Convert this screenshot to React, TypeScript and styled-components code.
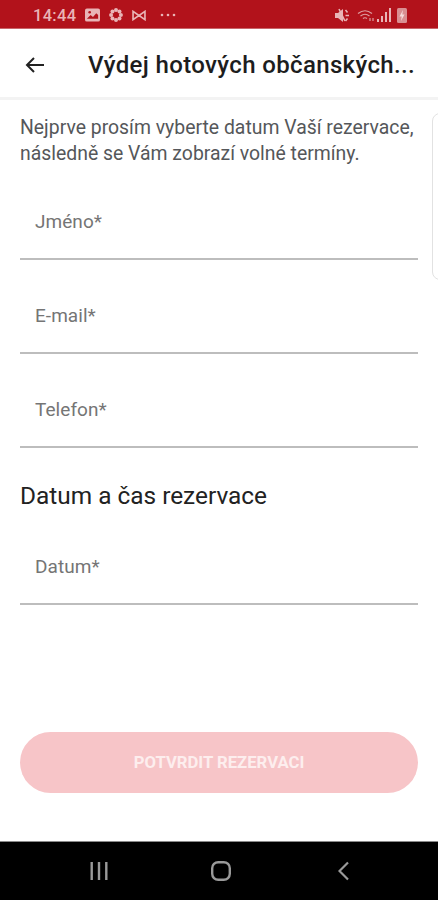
import React from 'react'
import styled, { createGlobalStyle } from 'styled-components'

const GlobalStyle = createGlobalStyle`
html, body {
  margin: 0;
  padding: 0;
  background: #fff;
}
`;
const Screen = styled.div`
width: 438px;
height: 900px;
display: flex;
flex-direction: column;
overflow: hidden;
font-family: Roboto, "Liberation Sans", sans-serif;
background: #fff;
`;
const StatusBar = styled.div`
height: 29px;
flex: none;
background: #b2121b;
border-bottom: 1px solid #c9656a;
display: flex;
align-items: center;
justify-content: space-between;
padding: 2px 31px 0 33px;
box-sizing: border-box;
color: #e9b4b6;
`;
const StatusGroup = styled.div`
display: flex;
align-items: center;
gap: ${(p: { $gap: number }) => p.$gap}px;
`;
const Clock = styled.span`
font-size: 16.5px;
font-weight: 500;
letter-spacing: 0.3px;
`;
const Header = styled.header`
height: 71px;
flex: none;
display: flex;
align-items: center;
padding: 4px 0 0 25px;
box-sizing: border-box;
background: #fff;
border-bottom: 3px solid #f3f3f3;
`;
const BackButton = styled.div`
width: 19px;
height: 16px;
flex: none;
display: flex;
margin-right: 44px;
`;
const Title = styled.h1`
margin: 0;
font-size: 24px;
font-weight: 500;
color: #1d1d1d;
white-space: nowrap;
letter-spacing: 0.36px;
`;
const Body = styled.div`
flex: 1;
display: flex;
flex-direction: column;
padding: 15px 20px 0;
position: relative;
`;
const Intro = styled.p`
margin: 0 0 13px;
font-size: 19.4px;
line-height: 26px;
color: #55575a;
white-space: nowrap;
`;
const Field = styled.div`
height: 80px;
margin-bottom: 14px;
box-sizing: border-box;
border-bottom: 2px solid #bdbdbd;
padding: 30px 0 0 15px;
font-size: 19px;
line-height: 24px;
letter-spacing: 0.05px;
color: #757575;
`;
const SectionTitle = styled.h2`
margin: 19px 0 14px;
font-size: 24.4px;
font-weight: 400;
line-height: 30px;
color: #222;
`;
const PeekCard = styled.div`
position: absolute;
top: 13px;
right: -12px;
width: 18px;
height: 167px;
box-sizing: border-box;
border: 1px solid #e2e2e2;
border-radius: 8px;
`;
const SubmitButton = styled.button`
margin-top: 113px;
height: 61px;
width: 100%;
flex: none;
border: 0;
border-radius: 31px;
background: #f7c5c8;
color: #fdeeee;
font-family: Roboto, "Liberation Sans", sans-serif;
font-size: 16.7px;
font-weight: 700;
`;
const NavBar = styled.nav`
height: 59px;
flex: none;
background: #000;
border-top: 1px solid #8a8a8a;
box-sizing: border-box;
display: flex;
align-items: center;
justify-content: space-between;
padding: 0 89px 0 90px;
`;

const App = () => {
  return (
    <Screen>
      <GlobalStyle />
      <StatusBar>
        <StatusGroup $gap={9}>
          <Clock>14:44</Clock>
          <svg width="15" height="14" viewBox="0 0 16 14">
            <rect width="16" height="14" rx="2" fill="#e9b4b6" />
            <path d="M2 11 L6 7 L8.5 9 L12 5 L14 7 V11 Z" fill="#b2121b" />
            <circle cx="5" cy="4" r="1.4" fill="#b2121b" />
          </svg>
          <svg width="14" height="14" viewBox="0 0 16 16" fill="#e9b4b6">
            <circle cx="8" cy="2.4" r="2.3" />
            <circle cx="8" cy="13.6" r="2.3" />
            <circle cx="2.4" cy="8" r="2.3" />
            <circle cx="13.6" cy="8" r="2.3" />
            <circle cx="4" cy="4" r="2.3" />
            <circle cx="12" cy="4" r="2.3" />
            <circle cx="4" cy="12" r="2.3" />
            <circle cx="12" cy="12" r="2.3" />
          </svg>
          <svg width="14" height="11" viewBox="0 0 15 12" fill="none" stroke="#e9b4b6" strokeWidth="1.8">
            <path d="M1 1.5 V10.5 L7.5 6 Z M14 1.5 V10.5 L7.5 6 Z" />
          </svg>
          <svg width="16" height="4" viewBox="0 0 16 4" fill="#e9b4b6" style={{ marginLeft: 5 }}>
            <circle cx="2" cy="2" r="1.3" />
            <circle cx="8" cy="2" r="1.3" />
            <circle cx="14" cy="2" r="1.3" />
          </svg>
        </StatusGroup>
        <StatusGroup $gap={0}>
          <svg width="22" height="15" viewBox="0 0 22 15" fill="#e9b4b6">
            <path d="M0 5 H3 L8 1 V14 L3 10 H0 Z" />
            <path d="M4 1 L10 13" stroke="#e9b4b6" strokeWidth="1.6" />
            <path d="M10.5 2 L12.5 4.5 M10.5 7.5 H14 M10.5 13 L12.5 10.5" stroke="#e9b4b6" strokeWidth="1.5" />
          </svg>
          <svg width="20" height="13" viewBox="0 0 20 13" fill="none" stroke="#dd9ea1" strokeWidth="1.2">
            <path d="M1 4.5 Q8 -1 15 4.5" />
            <path d="M3.5 7 Q8 3.5 12.5 7" />
            <path d="M6 9.5 Q8 8 10 9.5" />
            <path d="M13 9 V12 M16 9 V12" />
          </svg>
          <svg width="20" height="14" viewBox="0 0 20 14" fill="#e9b4b6">
            <rect x="0" y="11" width="2" height="3" />
            <rect x="4" y="8" width="2" height="6" />
            <rect x="8" y="4" width="2" height="10" />
            <rect x="12" y="0" width="2" height="14" />
          </svg>
          <svg width="10" height="15" viewBox="0 0 10 15">
            <rect width="10" height="15" rx="1.5" fill="#d98f92" />
            <path d="M6 2 L2.5 8.5 H4.7 L4 13 L7.5 6.5 H5.3 Z" fill="#f6dcdc" />
          </svg>
        </StatusGroup>
      </StatusBar>
      <Header>
        <BackButton>
          <svg width="19" height="16" viewBox="0 0 19 16" fill="none" stroke="#222" strokeWidth="2">
            <path d="M19 8 H2 M9 1 L2 8 L9 15" />
          </svg>
        </BackButton>
        <Title>Výdej hotových občanských...</Title>
      </Header>
      <Body>
        <PeekCard />
        <Intro>
          Nejprve prosím vyberte datum Vaší rezervace,
          <br />
          následně se Vám zobrazí volné termíny.
        </Intro>
        <Field>Jméno*</Field>
        <Field>E-mail*</Field>
        <Field>Telefon*</Field>
        <SectionTitle>Datum a čas rezervace</SectionTitle>
        <Field>Datum*</Field>
        <SubmitButton>POTVRDIT REZERVACI</SubmitButton>
      </Body>
      <NavBar>
        <svg width="18" height="18" viewBox="0 0 18 18" fill="#9a9a9a">
          <rect x="0.5" y="0" width="2.4" height="18" />
          <rect x="7.8" y="0" width="2.4" height="18" />
          <rect x="15.1" y="0" width="2.4" height="18" />
        </svg>
        <svg width="24" height="20" viewBox="0 0 24 20" fill="none" stroke="#9a9a9a" strokeWidth="2.4">
          <rect x="1.2" y="1.2" width="17.6" height="17.6" rx="6" />
        </svg>
        <svg width="11" height="20" viewBox="0 0 11 20" fill="none" stroke="#9a9a9a" strokeWidth="2.2">
          <path d="M10 1.5 L1.5 10 L10 18.5" />
        </svg>
      </NavBar>
    </Screen>
  )
}

export default App
